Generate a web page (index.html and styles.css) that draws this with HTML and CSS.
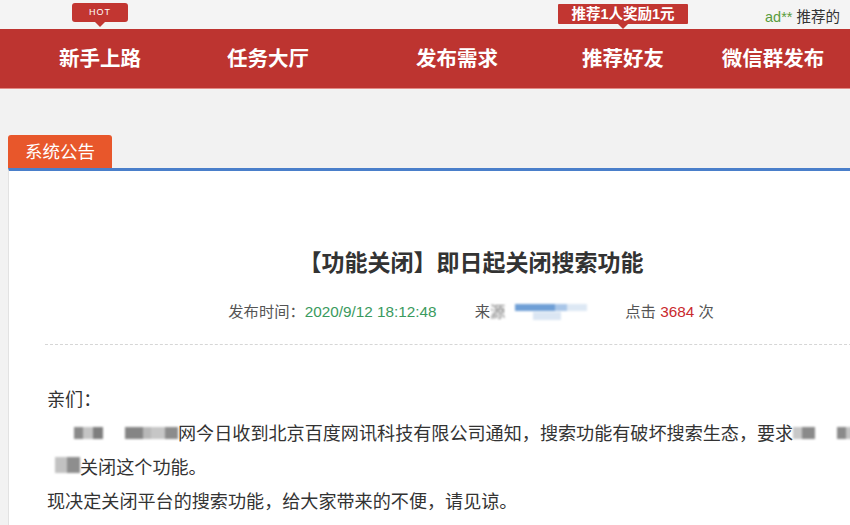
FILE: index.html
```html
<!DOCTYPE html>
<html>
<head>
    <title>系统公告</title>
    <link rel="stylesheet" href="styles.css">
</head>
<body>
    <div class="topbar">
        <div class="topbar-user"><span class="user-name">ad**</span> 推荐的</div>
    </div>

    <div class="nav">
        <div class="nav-item">新手上路<span class="badge badge-hot">HOT</span></div>
        <div class="nav-item">任务大厅</div>
        <div class="nav-item">发布需求</div>
        <div class="nav-item">推荐好友<span class="badge badge-invite">推荐1人奖励1元</span></div>
        <div class="nav-item">微信群发布</div>
    </div>

    <div class="notice">
        <div class="notice-tab">系统公告</div>
        <div class="notice-body">
            <h1 class="notice-title">【功能关闭】即日起关闭搜索功能</h1>
            <div class="notice-meta">
                <span>发布时间：<span class="meta-date">2020/9/12 18:12:48</span></span>
                <span class="meta-source">来<span class="blur-char">源</span><span class="mask mask-blue"></span></span>
                <span>点击 <span class="meta-hits">3684</span> 次</span>
            </div>
            <div class="notice-content">
                <p>亲们：</p>
                <p class="indent"><span class="mask mask-a"></span><span class="gap"></span><span class="mask mask-b"></span>网今日收到北京百度网讯科技有限公司通知，搜索功能有破坏搜索生态，要求<span class="mask mask-c"></span><span class="gap"></span><span class="mask mask-a"></span><br><span class="mask mask-d"></span>关闭这个功能。</p>
                <p>现决定关闭平台的搜索功能，给大家带来的不便，请见谅。</p>
            </div>
        </div>
    </div>
</body>
</html>
```

FILE: styles.css
```css
html, body {
    margin: 0;
    padding: 0;
}
body {
    font-family: "Liberation Sans", "Noto Sans CJK SC", sans-serif;
    background-color: #f2f2f2;
    color: #333;
    width: 850px;
    height: 525px;
    overflow: hidden;
}
.topbar {
    height: 29px;
    background-color: #f4f4f4;
    position: relative;
}
.topbar-user {
    position: absolute;
    left: 765px;
    top: 5px;
    font-size: 14.5px;
    white-space: nowrap;
    color: #333;
}
.user-name {
    color: #5a9c3c;
}
.nav {
    height: 59px;
    background-color: #bd3430;
    border-bottom: 1px solid #e38b86;
    display: grid;
    grid-template-columns: 160px 176px 202px 130px 170px;
    padding-left: 20px;
}
.nav-item {
    position: relative;
    text-align: center;
    line-height: 59px;
    color: #fff;
    font-size: 20.5px;
    font-weight: bold;
    white-space: nowrap;
}
.badge {
    position: absolute;
    left: 50%;
    transform: translateX(-50%);
    background-color: #c23631;
    color: #fff;
    font-weight: normal;
    white-space: nowrap;
}
.badge::after {
    content: "";
    position: absolute;
    left: 50%;
    bottom: -5px;
    margin-left: -5px;
    border-left: 5px solid transparent;
    border-right: 5px solid transparent;
    border-top: 5px solid #c23631;
}
.badge-hot {
    top: -26px;
    width: 56px;
    height: 19px;
    line-height: 19px;
    font-size: 9px;
    letter-spacing: 1px;
    border-radius: 3px;
}
.badge-invite {
    top: -25px;
    width: 130px;
    height: 20px;
    line-height: 20px;
    font-size: 14.5px;
    font-weight: bold;
    border-radius: 1px;
}
.notice {
    margin: 46px 0 0 8px;
    width: 925px;
}
.notice-tab {
    width: 104px;
    height: 33px;
    line-height: 35px;
    text-align: center;
    background-color: #e8572b;
    color: #fff;
    font-size: 17.5px;
    border-radius: 3px 3px 0 0;
}
.notice-body {
    background-color: #fff;
    border-top: 3px solid #4a7fca;
    border-left: 1px solid #e2e2e2;
    padding: 0 36px;
    height: 400px;
}
.notice-title {
    margin: 0;
    padding-top: 77px;
    text-align: center;
    font-size: 23px;
    line-height: 30px;
    color: #333;
}
.notice-meta {
    display: flex;
    justify-content: center;
    gap: 38px;
    margin-top: 24px;
    padding-bottom: 22px;
    border-bottom: 1px dashed #d6d6d6;
    font-size: 15.3px;
    line-height: 20px;
    color: #555;
}
.meta-date {
    color: #3a9a5e;
}
.meta-hits {
    color: #c9282d;
}
.meta-source {
    display: inline-flex;
    align-items: center;
}
.blur-char {
    filter: blur(1.2px);
    color: #777;
}
.notice-content {
    padding-top: 38px;
    padding-left: 2px;
    font-size: 18.1px;
    line-height: 34px;
    color: #333;
}
.notice-content p {
    margin: 0;
    white-space: nowrap;
}
.indent {
    text-indent: 27px;
}
.mask {
    display: inline-block;
    height: 12px;
    vertical-align: 1px;
    filter: blur(1px);
    text-indent: 0;
}
.gap {
    display: inline-block;
    width: 22px;
}
.mask-blue {
    width: 72px;
    height: 16px;
    margin-left: 10px;
    background:
        linear-gradient(90deg, transparent 0 18px, #dbe6f3 18px 46px, transparent 46px) 0 8px / 100% 8px no-repeat,
        linear-gradient(90deg, #6f9fd6 0 40px, #a9c6e8 40px 52px, #dde8f4 52px) 0 0 / 100% 7px no-repeat;
}
.mask-a {
    width: 29px;
    background: linear-gradient(90deg, #8a8a8a 0 9px, #c4c4c4 9px 19px, #7e7e7e 19px);
}
.mask-b {
    width: 53px;
    background: linear-gradient(90deg, #858585 0 18px, #b8b8b8 18px 26px, #c6c6c6 26px 40px, #8c8c8c 40px);
}
.mask-c {
    width: 22px;
    background: linear-gradient(90deg, #c8c8c8 0 9px, #8a8a8a 9px);
}
.mask-d {
    width: 25px;
    margin-left: 8px;
    height: 16px;
    background: linear-gradient(90deg, #c2c2c2 0 12px, #8e8e8e 12px);
}
```
